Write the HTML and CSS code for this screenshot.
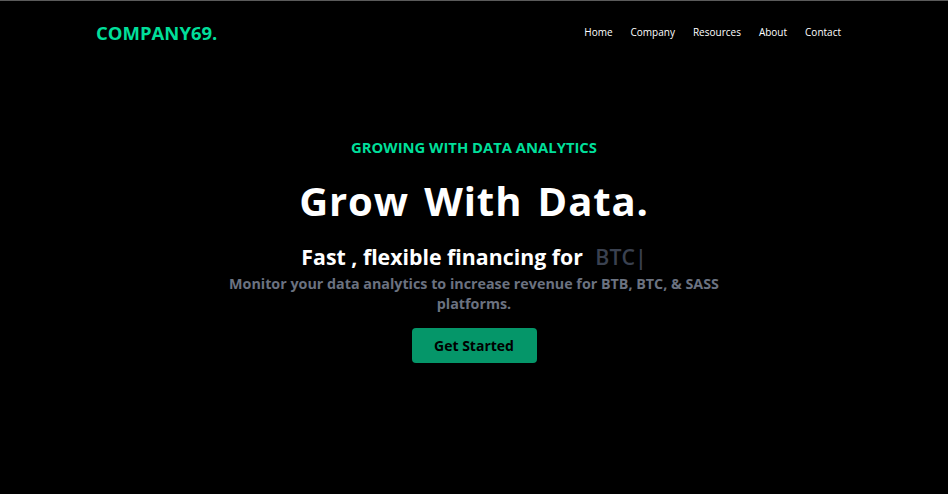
FILE: index.html
```html
<!DOCTYPE html>
<html lang="en">
<head>
<meta charset="utf-8">
<title>Company69</title>
<link rel="stylesheet" href="styles.css">
</head>
<body>
<header class="navbar">
  <h1 class="logo">COMPANY69.</h1>
  <nav class="menu">
    <a href="#">Home</a>
    <a href="#">Company</a>
    <a href="#">Resources</a>
    <a href="#">About</a>
    <a href="#">Contact</a>
  </nav>
</header>
<main class="hero">
  <p class="eyebrow">GROWING WITH DATA ANALYTICS</p>
  <h2 class="title">Grow With Data.</h2>
  <p class="typed-line">Fast , flexible financing for <span class="typed">BTC|</span></p>
  <p class="lead">Monitor your data analytics to increase revenue for BTB, BTC, &amp; SASS platforms.</p>
  <button class="cta">Get Started</button>
</main>
</body>
</html>
```
FILE: styles.css
```css
* { box-sizing: border-box; }
html, body { margin: 0; padding: 0; }
body {
  background: #000;
  color: #fff;
  font-family: "Open Sans", "Liberation Sans", sans-serif;
  border-top: 1px solid #5a5a5a;
  min-height: 100vh;
}
.navbar {
  width: 760px;
  margin: 0 auto;
  height: 62px;
  display: flex;
  align-items: center;
  justify-content: space-between;
  padding: 0 13px 0 2px;
}
.logo {
  margin: 0;
  font-size: 18.5px;
  font-weight: 700;
  color: #00df9a;
}
.menu {
  display: flex;
  gap: 18px;
  padding-left: 2px;
}
.menu a {
  color: #fff;
  text-decoration: none;
  font-size: 10px;
}
.hero {
  display: flex;
  flex-direction: column;
  align-items: center;
  text-align: center;
  padding-top: 74px;
}
.eyebrow {
  margin: 0;
  color: #00df9a;
  font-weight: 700;
  font-size: 14.8px;
  line-height: 20px;
}
.title {
  margin: 20px 0 0;
  font-size: 40px;
  font-weight: 700;
  line-height: 48px;
  letter-spacing: 0.9px;
  word-spacing: 4px;
}
.typed-line {
  margin: 17px 0 0;
  font-size: 21.3px;
  font-weight: 700;
  line-height: 30px;
}
.typed { color: #3a4150; margin-left: 7px; font-weight: 600; }
.lead {
  margin: 2px 0 0;
  width: 500px;
  color: #6b7280;
  font-weight: 700;
  font-size: 14.3px;
  line-height: 20px;
}
.cta {
  margin-top: 14px;
  width: 125px;
  height: 35px;
  border: none;
  border-radius: 4px;
  background: #059669;
  color: #000;
  font-family: inherit;
  font-weight: 700;
  font-size: 14px;
}
```
